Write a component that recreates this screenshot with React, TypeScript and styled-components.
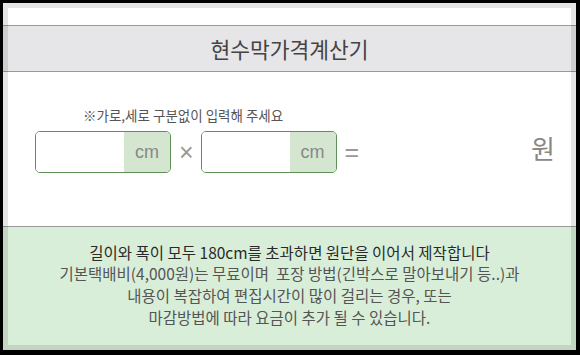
import styled, { createGlobalStyle } from "styled-components";

const GlobalStyle = createGlobalStyle`
  html, body {
    margin: 0;
    padding: 0;
    background: #000;
  }
  body {
    font-family: "Noto Sans CJK KR", "Noto Sans", sans-serif;
  }
`;

const Frame = styled.div`
  position: relative;
  margin: 3px 4px 5px 3px;
  height: 347px;
  background: #fff;
  display: flex;
  flex-direction: column;
  overflow: hidden;

  &::after {
    content: "";
    position: absolute;
    inset: 0;
    border: 5px solid rgba(0, 0, 0, 0.1);
    pointer-events: none;
  }
`;

const TitleBar = styled.h1`
  margin: 22px 0 0;
  height: 45px;
  border-top: 1px solid #999;
  border-bottom: 1px solid #999;
  background: #e6e6e8;
  display: flex;
  align-items: center;
  justify-content: center;
  font-size: 21.5px;
  font-weight: 400;
  color: #444;
`;

const Body = styled.div`
  flex: 1;
  padding: 34px 21px 0 32px;
`;

const Hint = styled.p`
  margin: 0 0 7px 48px;
  font-size: 13.5px;
  line-height: 18px;
  color: #555;
`;

const Row = styled.div`
  display: flex;
  align-items: center;
`;

const SizeBox = styled.div`
  width: 136px;
  height: 42px;
  box-sizing: border-box;
  border: 1px solid #5e8f56;
  border-radius: 5px;
  overflow: hidden;
  display: flex;
`;

const SizeInput = styled.input`
  flex: 1;
  min-width: 0;
  border: none;
  outline: none;
  background: #fff;
  padding: 0 8px;
  font-size: 16px;
`;

const Unit = styled.span`
  width: 46px;
  background: #d4e6d0;
  display: flex;
  align-items: center;
  justify-content: center;
  font-family: "Liberation Sans", Arial, sans-serif;
  font-size: 18px;
  color: #888;
`;

const Operator = styled.span<{ $gap: number }>`
  margin: 0 ${(p) => p.$gap}px 0 8px;
  font-family: "Liberation Sans", Arial, sans-serif;
  font-size: 25px;
  color: #999;
  line-height: 1;
`;

const Result = styled.span`
  flex: 1;
  text-align: right;
  font-size: 16px;
  color: #444;
`;

const Won = styled.span`
  margin-left: 4px;
  font-size: 26px;
  color: #888;
  line-height: 1;
  padding-bottom: 8px;
`;

const Notice = styled.div`
  height: 124px;
  border-top: 1px solid #999;
  background: #d9eed9;
  text-align: center;
  padding-top: 16px;
  box-sizing: border-box;
`;

const Lead = styled.p`
  margin: 0;
  font-size: 15.5px;
  line-height: 19px;
  color: #2a2a2a;
`;

const Detail = styled.p`
  margin: 0;
  font-size: 15.5px;
  line-height: 22px;
  color: #555;
`;

export default function App() {
  return (
    <>
      <GlobalStyle />
      <Frame>
        <TitleBar>현수막가격계산기</TitleBar>
        <Body>
          <Hint>※가로,세로 구분없이 입력해 주세요</Hint>
          <Row>
            <SizeBox>
              <SizeInput type="text" />
              <Unit>cm</Unit>
            </SizeBox>
            <Operator $gap={7}>×</Operator>
            <SizeBox>
              <SizeInput type="text" />
              <Unit>cm</Unit>
            </SizeBox>
            <Operator $gap={0}>=</Operator>
            <Result></Result>
            <Won>원</Won>
          </Row>
        </Body>
        <Notice>
          <Lead>길이와 폭이 모두 180cm를 초과하면 원단을 이어서 제작합니다</Lead>
          <Detail>
            기본택배비(4,000원)는 무료이며&nbsp; 포장 방법(긴박스로 말아보내기 등..)과
            <br />
            내용이 복잡하여 편집시간이 많이 걸리는 경우, 또는
            <br />
            마감방법에 따라 요금이 추가 될 수 있습니다.
          </Detail>
        </Notice>
      </Frame>
    </>
  );
}
